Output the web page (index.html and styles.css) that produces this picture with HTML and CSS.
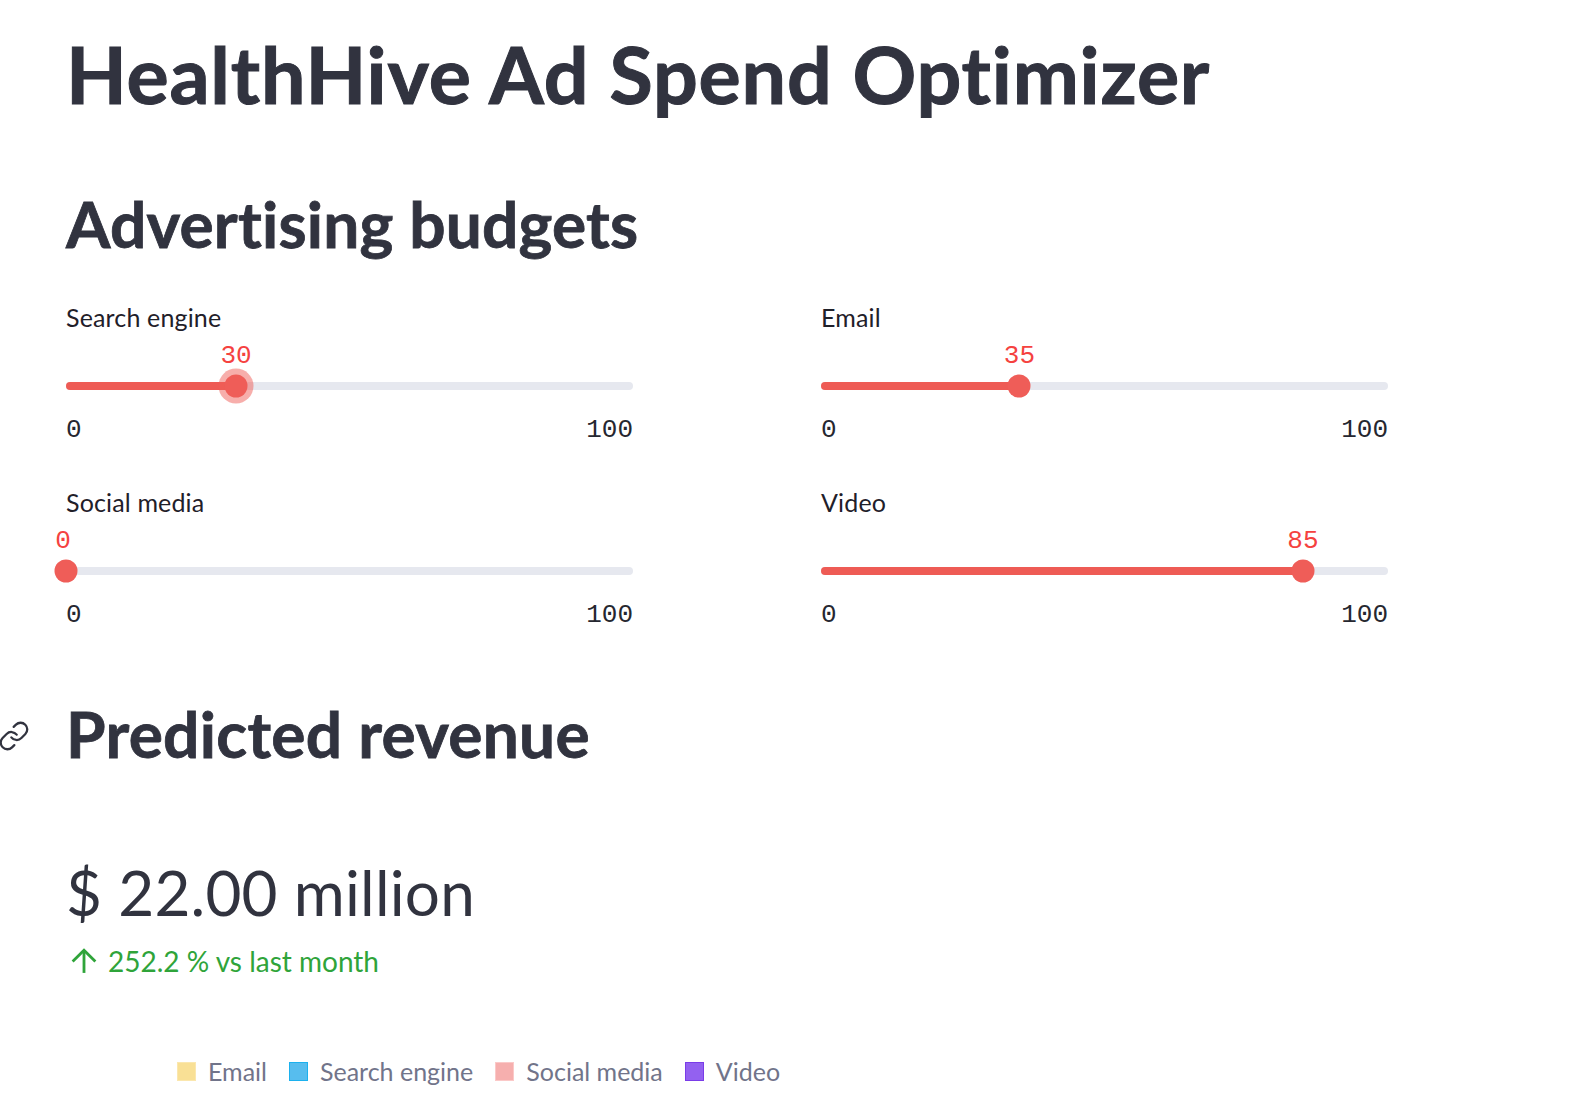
FILE: index.html
```html
<!DOCTYPE html>
<html lang="en">
<head>
    <meta charset="UTF-8">
    <title>HealthHive Ad Spend Optimizer</title>
    <link rel="stylesheet" href="styles.css">
</head>
<body>
    <main class="page">
        <h1 class="title">HealthHive Ad Spend Optimizer</h1>
        <h2 class="heading budgets">Advertising budgets</h2>

        <div class="sliders">
            <div class="slider">
                <div class="slider-label">Search engine</div>
                <div class="slider-value-row"><span class="slider-value" style="left: 30%">30</span></div>
                <div class="track">
                    <div class="track-fill" style="width: 30%"></div>
                    <div class="thumb thumb-focus" style="left: 30%"></div>
                </div>
                <div class="slider-range"><span>0</span><span>100</span></div>
            </div>
            <div class="slider">
                <div class="slider-label">Email</div>
                <div class="slider-value-row"><span class="slider-value" style="left: 35%">35</span></div>
                <div class="track">
                    <div class="track-fill" style="width: 35%"></div>
                    <div class="thumb" style="left: 35%"></div>
                </div>
                <div class="slider-range"><span>0</span><span>100</span></div>
            </div>
            <div class="slider">
                <div class="slider-label">Social media</div>
                <div class="slider-value-row"><span class="slider-value slider-value-min" style="left: 0%">0</span></div>
                <div class="track">
                    <div class="track-fill" style="width: 0%"></div>
                    <div class="thumb" style="left: 0%"></div>
                </div>
                <div class="slider-range"><span>0</span><span>100</span></div>
            </div>
            <div class="slider">
                <div class="slider-label">Video</div>
                <div class="slider-value-row"><span class="slider-value" style="left: 85%">85</span></div>
                <div class="track">
                    <div class="track-fill" style="width: 85%"></div>
                    <div class="thumb" style="left: 85%"></div>
                </div>
                <div class="slider-range"><span>0</span><span>100</span></div>
            </div>
        </div>

        <h2 class="heading revenue">
            <svg class="link-icon" viewBox="0 0 24 24" fill="none" stroke="currentColor" stroke-width="2" stroke-linecap="round" stroke-linejoin="round">
                <path d="M10 13a5 5 0 0 0 7.54.54l3-3a5 5 0 0 0-7.07-7.07l-1.72 1.71"></path>
                <path d="M14 11a5 5 0 0 0-7.54-.54l-3 3a5 5 0 0 0 7.07 7.07l1.71-1.71"></path>
            </svg>
            Predicted revenue
        </h2>

        <div class="metric-value">$ 22.00 million</div>
        <div class="metric-delta">
            <svg class="delta-arrow" viewBox="0 0 24 24" fill="none" stroke="currentColor" stroke-width="2.6">
                <path d="M12 23V2"></path>
                <path d="M1.5 12.5L12 2l10.5 10.5"></path>
            </svg>
            <span>252.2 % vs last month</span>
        </div>

        <div class="legend">
            <div class="legend-item"><i class="swatch swatch-email"></i>Email</div>
            <div class="legend-item"><i class="swatch swatch-search"></i>Search engine</div>
            <div class="legend-item"><i class="swatch swatch-social"></i>Social media</div>
            <div class="legend-item"><i class="swatch swatch-video"></i>Video</div>
        </div>
    </main>
</body>
</html>
```

FILE: styles.css
```css
body {
    margin: 0;
    background-color: #fff;
    color: #31333f;
    font-family: "Lato", "Noto Sans", sans-serif;
    font-variant-ligatures: none;
    overflow: hidden;
}
.page {
    height: 1116px;
    padding-left: 66px;
    overflow: hidden;
}
.title {
    margin: 0;
    padding-top: 22px;
    font-size: 79px;
    line-height: 104px;
    font-weight: 700;
    letter-spacing: 0.8px;
    -webkit-text-stroke: 1px #31333f;
}
.heading {
    margin: 0;
    font-size: 64px;
    line-height: 80px;
    font-weight: 700;
    letter-spacing: 0.2px;
    -webkit-text-stroke: 0.8px #31333f;
}
.budgets {
    margin-top: 58px;
}
.sliders {
    display: grid;
    grid-template-columns: 567px 567px;
    column-gap: 188px;
    row-gap: 38px;
    margin-top: 37px;
}
.slider-label {
    font-size: 25px;
    line-height: 32px;
    letter-spacing: 0.15px;
    color: #1f2029;
}
.slider-value-row {
    position: relative;
    height: 41px;
}
.slider-value {
    position: absolute;
    bottom: 0;
    transform: translateX(-50%);
    font-family: "Liberation Mono", monospace;
    font-size: 26px;
    line-height: 36px;
    color: #f5423f;
}
.slider-value-min {
    margin-left: -3px;
}
.track {
    position: relative;
    height: 8px;
    margin-top: 8px;
    border-radius: 4px;
    background-color: #e6e8ef;
}
.track-fill {
    height: 100%;
    border-radius: 4px;
    background-color: #ee5b55;
}
.thumb {
    position: absolute;
    top: 50%;
    width: 23px;
    height: 23px;
    border-radius: 50%;
    background-color: #ef5d58;
    transform: translate(-50%, -50%);
}
.thumb-focus {
    box-shadow: 0 0 0 6px rgba(239, 93, 88, 0.5);
}
.slider-range {
    display: flex;
    justify-content: space-between;
    margin-top: 22px;
    font-family: "Liberation Mono", monospace;
    font-size: 26px;
    line-height: 36px;
    color: #262730;
}
.revenue {
    position: relative;
    margin-top: 61px;
    letter-spacing: 0.3px;
}
.link-icon {
    position: absolute;
    left: -68px;
    top: 26px;
    width: 32px;
    height: 32px;
    stroke-width: 1.7;
}
.metric-value {
    margin-top: 78px;
    font-size: 62px;
    line-height: 80px;
    letter-spacing: 0.2px;
}
.metric-delta {
    display: flex;
    align-items: center;
    margin-top: 9px;
    font-size: 28px;
    line-height: 40px;
    color: #2fa43a;
}
.delta-arrow {
    width: 26px;
    height: 26px;
    margin: 0 11px 0 5px;
}
.legend {
    display: flex;
    gap: 22px;
    margin-top: 72px;
    margin-left: 111px;
    font-size: 25px;
    line-height: 36px;
    color: #71748a;
}
.legend-item {
    display: flex;
    align-items: center;
    gap: 12px;
}
.swatch {
    width: 19px;
    height: 19px;
    border: 1px solid transparent;
    box-sizing: border-box;
}
.swatch-email {
    background-color: #f9e095;
    border-color: #fbe7ae;
}
.swatch-search {
    background-color: #57bdee;
    border-color: #1cb1ee;
}
.swatch-social {
    background-color: #f6afae;
    border-color: #fbc9c8;
}
.swatch-video {
    background-color: #9361f0;
    border-color: #7a3ce8;
}
```
